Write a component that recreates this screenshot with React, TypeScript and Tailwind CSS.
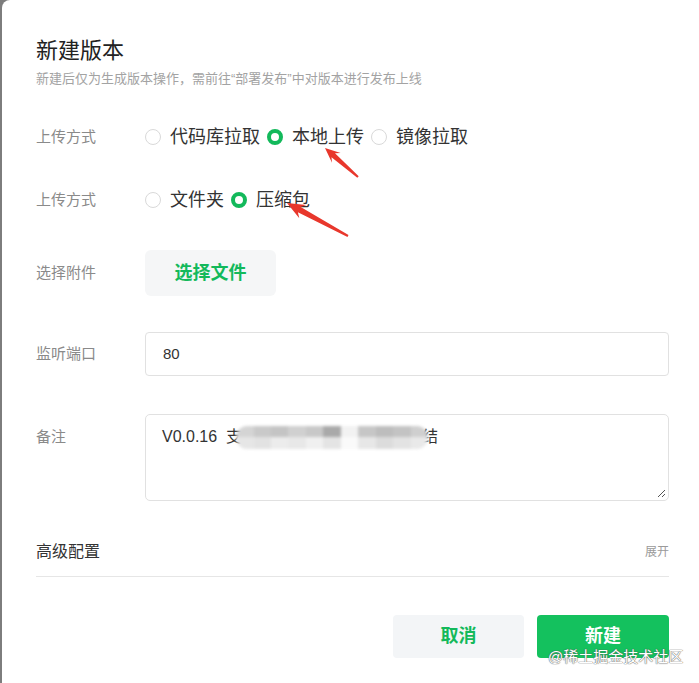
import React from "react";

function Radio({ checked, label }: { checked?: boolean; label: string }) {
  return (
    <div className="flex items-center">
      {checked ? (
        <span className="box-border h-4 w-4 rounded-full border-[4.5px] border-[#13b95b] bg-white" />
      ) : (
        <span className="box-border h-4 w-4 rounded-full border-[1.5px] border-[#d9d9d9] bg-white" />
      )}
      <span className="ml-[9px] mr-[7px] text-[18px] leading-[26px] text-[#333]">{label}</span>
    </div>
  );
}

function Label({ children }: { children: React.ReactNode }) {
  return <div className="w-[109px] shrink-0 text-[15px] leading-[22px] text-[#8a8a8a]">{children}</div>;
}

// red arrow drawn as one polygon, tip -> tail
function arrow(tx: number, ty: number, ex: number, ey: number, hl: number, hw: number, neck: number, tail: number) {
  const dx = ex - tx;
  const dy = ey - ty;
  const L = Math.hypot(dx, dy);
  const ux = dx / L;
  const uy = dy / L;
  const nx = -uy;
  const ny = ux;
  const p = (a: number, b: number) => `${(tx + ux * a + nx * b).toFixed(1)},${(ty + uy * a + ny * b).toFixed(1)}`;
  return [
    p(0, 0),
    p(hl, hw),
    p(hl - 4, neck),
    p(L, tail),
    p(L, -tail),
    p(hl - 4, -neck),
    p(hl, -hw),
  ].join(" ");
}

const mosaicTop = ["#d4d4d4", "#c9c9c9", "#c4c4c4", "#d0d0d0", "#c8c8c8", "#a9a9a9", "#f2f2f2", "#c6c6c6", "#bdbdbd", "#c3c3c3", "#cfcfcf"];
const mosaicBottom = ["#e6e6e6", "#e2e2e2", "#ececec", "#e8e8e8", "#f0f0f0", "#e4e4e4", "#fafafa", "#e7e7e7", "#dcdcdc", "#e3e3e3", "#e9e9e9"];

export default function App() {
  return (
    <div className="relative h-[683px] w-[699px] overflow-hidden bg-[#7d7d7d] font-['Liberation_Sans','Noto_Sans_CJK_SC',sans-serif]">
      <div className="ml-[2px] flex h-full flex-col rounded-tl-[8px] bg-white pl-[34px] pr-[30px] pt-[36px]">
        <div className="text-[22px] leading-[30px] text-[#222]">新建版本</div>
        <div className="mt-[4px] text-[13px] leading-[18px] text-[#a3a3a3]">
          新建后仅为生成版本操作，需前往“部署发布”中对版本进行发布上线
        </div>

        <div className="mt-[29px] flex h-[40px] items-center">
          <Label>上传方式</Label>
          <Radio label="代码库拉取" />
          <Radio checked label="本地上传" />
          <Radio label="镜像拉取" />
        </div>

        <div className="mt-[23px] flex h-[40px] items-center">
          <Label>上传方式</Label>
          <Radio label="文件夹" />
          <Radio checked label="压缩包" />
        </div>

        <div className="mt-[30px] flex h-[46px] items-center">
          <Label>选择附件</Label>
          <button className="h-[46px] w-[131px] rounded-[6px] bg-[#f5f6f7] text-[18px] font-bold text-[#13b95b]">
            选择文件
          </button>
        </div>

        <div className="mt-[36px] flex items-center">
          <Label>监听端口</Label>
          <div className="flex h-[44px] flex-1 items-center rounded-[4px] border border-[#e1e1e1] pl-[17px] text-[15px] text-[#333]">
            80
          </div>
        </div>

        <div className="mt-[38px] flex">
          <div className="pt-[12px]">
            <Label>备注</Label>
          </div>
          <div className="relative h-[87px] flex-1 rounded-[5px] border border-[#e1e1e1] pl-[16px] pt-[10px]">
            <div className="flex items-center text-[16px] leading-[24px] text-[#333]">
              <span>V0.0.16&nbsp;&nbsp;支</span>
              <span className="-ml-[6px] flex h-[23px] w-[192px] flex-col overflow-hidden rounded-full blur-[1.5px]">
                <span className="flex h-1/2">
                  {mosaicTop.map((c, i) => (
                    <span key={i} className="flex-1" style={{ background: c }} />
                  ))}
                </span>
                <span className="flex h-1/2">
                  {mosaicBottom.map((c, i) => (
                    <span key={i} className="flex-1" style={{ background: c }} />
                  ))}
                </span>
              </span>
              <span className="-ml-[6px]">结</span>
            </div>
            <svg className="absolute bottom-[2px] right-[2px]" width="10" height="10" viewBox="0 0 10 10">
              <path d="M9 2 L2 9 M9 6 L6 9" stroke="#555" strokeWidth="1" />
            </svg>
          </div>
        </div>

        <div className="mt-[35px] flex items-center justify-between border-b border-[#e6e6e6] pb-[12px] pt-[4px]">
          <span className="text-[16px] leading-[24px] text-[#333]">高级配置</span>
          <span className="text-[12px] text-[#9a9a9a]">展开</span>
        </div>

        <div className="mt-[38px] flex justify-end gap-[13px]">
          <button className="h-[43px] w-[131px] rounded-[4px] bg-[#f3f5f7] text-[18px] font-bold text-[#13b95b]">
            取消
          </button>
          <button className="h-[43px] w-[132px] rounded-[4px] bg-[#14c15e] text-[18px] font-bold text-white">
            新建
          </button>
        </div>
      </div>

      <svg className="pointer-events-none absolute inset-0" width="699" height="683">
        <polygon points={arrow(325, 148, 358, 177, 15, 6.5, 2.6, 1)} fill="#e8372c" />
        <polygon points={arrow(287, 203, 348, 236, 18, 7.5, 3, 1)} fill="#e8372c" />
      </svg>

      <div className="absolute left-[548px] top-[646px] text-[15px] leading-[22px] text-white [text-shadow:0_0_1px_#555,0_0_1px_#555]">
        @稀土掘金技术社区
      </div>
    </div>
  );
}
